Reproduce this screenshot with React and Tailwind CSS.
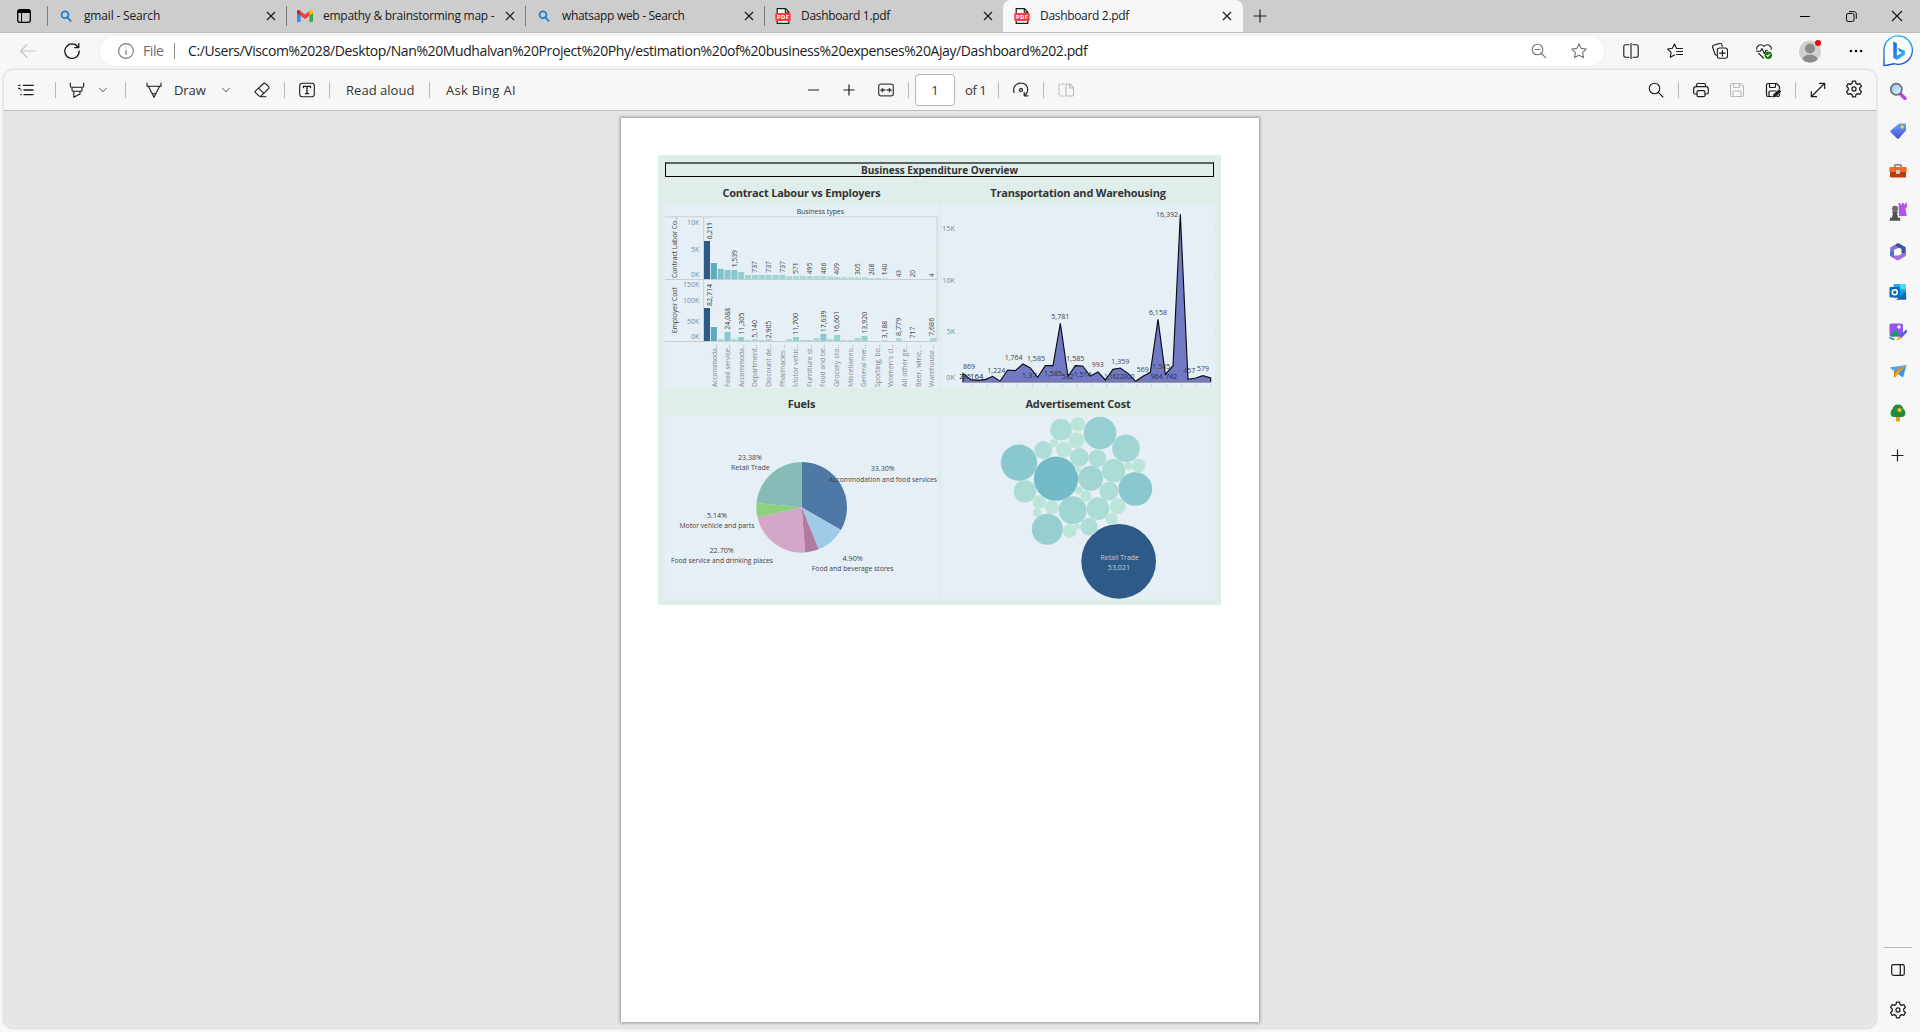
import React from "react";

/* ---------- icon helpers ---------- */
function Ico({ c = "#1b1b1b", w = 16, sw = 1.1, children }) {
  return (
    <svg width={w} height={w} viewBox="0 0 16 16" fill="none" stroke={c} strokeWidth={sw} strokeLinecap="round" strokeLinejoin="round" className="block shrink-0">
      {children}
    </svg>
  );
}

const Close = () => (
  <svg width="10" height="10" viewBox="0 0 10 10" stroke="#1b1b1b" strokeWidth="1.2" className="block shrink-0"><path d="M1 1l8 8M9 1l-8 8" /></svg>
);
const SearchFav = () => (
  <svg width="12" height="12" viewBox="0 0 12 12" fill="none" stroke="#1b7ac9" strokeWidth="1.7" strokeLinecap="round" className="block"><circle cx="5" cy="4.8" r="3.4" /><path d="M7.6 7.6L10.8 11" /></svg>
);
const GmailFav = () => (
  <svg width="16" height="12" viewBox="0 0 16 12" className="block">
    <path d="M0 2v9a1 1 0 001 1h2.6V5z" fill="#4285f4" />
    <path d="M16 2v9a1 1 0 01-1 1h-2.600V5z" fill="#34a853" />
    <path d="M12.400 1.300V5.700L16 3V1.700C16 0 14-.5 12.800.700z" fill="#fbbc04" />
    <path d="M3.600 1.300V5.700L0 3V1.700C0 0 2-.5 3.200.700z" fill="#c5221f" />
    <path d="M3.600 1.200L8 4.600l4.400-3.400v4.500L8 9 3.600 5.700z" fill="#ea4335" />
  </svg>
);
const PdfFav = () => (
  <svg width="16" height="16" viewBox="0 0 16 16" className="block">
    <path d="M2.200.700h8.300l3.300 3.300v11.300H2.200z" fill="#fff" stroke="#1b1b1b" strokeWidth="1.2" />
    <path d="M10.300.700V4.200h3.500" fill="none" stroke="#1b1b1b" strokeWidth="1.1" />
    <rect x="0.300" y="5" width="15.400" height="8" rx="1" fill="#f93e3e" />
    <text x="8" y="11.200" fontSize="5.800" fontWeight="700" fill="#fff" textAnchor="middle" textLength="12" fontFamily="Open Sans, sans-serif">PDF</text>
  </svg>
);
const Chevron = () => (
  <svg width="10" height="6" viewBox="0 0 10 6" fill="none" stroke="#555" strokeWidth="1" className="block"><path d="M1.200 1L5 4.600 8.800 1" /></svg>
);
const Sep = () => <div className="h-4 w-px shrink-0 bg-[#b8b8b8]" />;
const GearPath = () => (
  <>
    <path d="M6.700 1h2.600l.5 2 1.500.9 2-.6 1.300 2.300-1.500 1.500v1.800l1.500 1.500-1.300 2.300-2-.6-1.500.9-.5 2H6.700l-.5-2-1.500-.9-2 .6-1.300-2.300 1.500-1.500V7.100L1.400 5.600l1.300-2.300 2 .6 1.500-.9z" />
    <circle cx="8" cy="8" r="1.800" />
  </>
);
const Floppy = () => (
  <>
    <path d="M1.500 3c0-.8.7-1.500 1.500-1.500h8.500l3 3V13c0 .8-.7 1.500-1.500 1.500H3c-.8 0-1.500-.7-1.500-1.500z" />
    <path d="M4.500 1.700V4.500c0 .6.4 1 1 1h4c.6 0 1-.4 1-1V1.700M4 14.300V10c0-.6.4-1 1-1h6c.6 0 1 .4 1 1v4.300" />
  </>
);

/* ---------- tab strip ---------- */
const TABS = [
  { icon: <SearchFav />, title: "gmail - Search", cls: "tracking-[-0.17px]" },
  { icon: <GmailFav />, title: "empathy & brainstorming map -", cls: "tracking-[-0.27px]" },
  { icon: <SearchFav />, title: "whatsapp web - Search", cls: "tracking-[-0.32px]" },
  { icon: <PdfFav />, title: "Dashboard 1.pdf", cls: "tracking-[-0.32px]" },
];

function TabBody({ icon, title, cls }) {
  return (
    <>
      <div className="ml-[10px] flex w-4 shrink-0 justify-center">{icon}</div>
      <div className={"ml-[10px] w-[182px] shrink-0 overflow-hidden text-[12px] leading-4 whitespace-nowrap text-[#1b1b1b] " + cls}>{title}</div>
      <Close />
    </>
  );
}

function TabStrip() {
  return (
    <div className="flex h-8 items-center bg-[#cdcdcd]">
      <div className="flex w-[47px] shrink-0 justify-center">
        <svg width="14" height="14" viewBox="0 0 14 14"><rect x=".7" y=".7" width="12.600" height="12.600" rx="2" fill="none" stroke="#000" strokeWidth="1.300" /><path d="M1 1h12v3H1z" /><path d="M4.500 4v9" stroke="#000" /></svg>
      </div>
      {TABS.map((t) => (
        <div key={t.title} className="flex h-8 w-[239px] shrink-0 items-center">
          <div className="h-5 w-px shrink-0 bg-[#7b7b7b]" />
          <TabBody {...t} />
        </div>
      ))}
      <div className="flex h-8 w-[240px] shrink-0 items-center rounded-t-lg bg-[#f7f7f7] pl-px">
        <TabBody icon={<PdfFav />} title="Dashboard 2.pdf" cls="tracking-[-0.32px]" />
      </div>
      <div className="ml-[10px]">
        <svg width="14" height="14" viewBox="0 0 14 14" stroke="#1b1b1b" strokeWidth="1.1" className="block"><path d="M7 .5v13M.5 7h13" /></svg>
      </div>
      <div className="ml-auto flex items-center pr-[17px]">
        <div className="h-px w-[10px] bg-black" />
        <svg width="11" height="11" viewBox="0 0 11 11" fill="none" stroke="#111" className="ml-9 block"><rect x=".5" y="2.500" width="7.500" height="8" rx="1.500" /><path d="M3 .6h5c1.300 0 2.300 1 2.300 2.300v5" /></svg>
        <svg width="12" height="12" viewBox="0 0 12 12" stroke="#111" strokeWidth="1.100" className="ml-[34px] block"><path d="M1 1l10 10M11 1L1 11" /></svg>
      </div>
    </div>
  );
}

/* ---------- address row ---------- */
function AddressRow() {
  return (
    <div className="flex h-[38px] items-center border-t border-[#bdbdbd] bg-[#f7f7f7] pb-px">
      <div className="ml-5"><Ico c="#c4c4c4"><path d="M15.500 8H.8M7 1.500L.6 8 7 14.500" /></Ico></div>
      <div className="ml-7"><Ico sw={1.3}><path d="M13.800 3.900A7.200 7.200 0 1015.200 8M14.800.6v4h-4" /></Ico></div>
      <div className="ml-5 flex h-[30px] w-[1504px] items-center rounded-full bg-white pl-[18px] shadow-[0_0_3px_rgba(0,0,0,0.06)]">
        <Ico c="#767676"><circle cx="8" cy="8" r="7.400" /><path d="M8 7.200v4.300M8 4.700v.2" /></Ico>
        <div className="ml-[9px] w-[31px] text-[14px] leading-5 tracking-[-0.4px] text-[#6e6e6e]">File</div>
        <div className="h-4 w-px bg-[#8f8f8f]" />
        <div className="ml-[13px] w-[1343px] text-[14px] leading-5 tracking-[-0.403px] whitespace-nowrap text-[#1b1b1b]">
          C:/Users/Viscom%2028/Desktop/Nan%20Mudhalvan%20Project%20Phy/estimation%20of%20business%20expenses%20Ajay/Dashboard%202.pdf
        </div>
        <Ico c="#767676"><circle cx="6.500" cy="6.500" r="5.300" /><path d="M10.500 10.500l4.300 4.300M4 6.500h5" /></Ico>
        <div className="ml-6"><Ico c="#767676"><path d="M8 .8l2.200 4.600 5 .7-3.600 3.500.9 5L8 12.200l-4.500 2.400.9-5L.8 6.100l5-.7z" /></Ico></div>
      </div>
      <div className="ml-[19px]"><Ico><path d="M6 1.800H2.500C1.500 1.800.8 2.500.8 3.500v9c0 1 .7 1.700 1.700 1.700H6M10 1.800h3.500c1 0 1.700.7 1.700 1.700v9c0 1-.7 1.700-1.700 1.700H10M8 .3v15.400" /></Ico></div>
      <div className="ml-7"><Ico><path d="M9.600 5.300L7.500 1 5.400 5.300.7 6l3.400 3.400-.8 4.800 4.200-2.300M9.600 5.500h6M9.600 8.500h6M9.600 11.500h6" /></Ico></div>
      <div className="ml-[29px]"><Ico><path d="M4.700 12.200L3.200 11.800 .6 4.300c-.3-1 .2-1.800 1-2.100L7.600.4c.9-.3 1.800.2 2.100 1l.6 2.100" /><rect x="5.300" y="5" width="10.200" height="10.200" rx="2.200" /><path d="M10.400 7.300v5.600M7.600 10.100h5.600" /></Ico></div>
      <div className="ml-7">
        <Ico><path d="M.8 6.300C.2 2.800 4.700-.1 8 3.300c3.300-3.400 7.800-.5 7.200 3M.3 8.300h4l1.600-2.800 2.500 5 1.700-3.200h1.200M2.600 10.300L7.500 15" /><circle cx="12.300" cy="12.300" r="3.700" fill="#137a13" stroke="none" /><path d="M10.800 12.400l1 1 2-2.200" stroke="#fff" /></Ico>
      </div>
      <div className="ml-[27px]">
        <svg width="22" height="24" viewBox="0 0 22 24" className="block"><circle cx="11" cy="12.500" r="11" fill="#d2d0ce" /><circle cx="11" cy="9.500" r="5" fill="#8d8b89" /><path d="M3.500 20.500c0-6.500 15-6.500 15 0-3.500 4-11.500 4-15 0z" fill="#8d8b89" /><circle cx="19" cy="4" r="3" fill="#e8060c" /></svg>
      </div>
      <div className="ml-7"><svg width="14" height="4" viewBox="0 0 14 4" className="block"><circle cx="1.900" cy="2" r="1.300" /><circle cx="7" cy="2" r="1.300" /><circle cx="12.100" cy="2" r="1.300" /></svg></div>
      <div className="ml-5">
        <svg width="30" height="32" viewBox="0 0 30 32" className="block">
          <defs>
            <linearGradient id="bingRing" x1="0" y1="0" x2="0" y2="1"><stop offset="0" stopColor="#2bb5ea" /><stop offset="1" stopColor="#1b4fd0" /></linearGradient>
            <linearGradient id="bingB" x1="0" y1="0" x2="1" y2="1"><stop offset="0" stopColor="#1d60e0" /><stop offset=".5" stopColor="#2a8bf0" /><stop offset="1" stopColor="#3fd0e8" /></linearGradient>
          </defs>
          <path d="M1 30.500V15a14.200 14.200 0 1110 13.700L3.500 30.300z" fill="#fff" stroke="url(#bingRing)" strokeWidth="1.400" />
          <path d="M10.300 6.500l3.600 1.700v12.600l5-3-2.700-1.200-1.500-3.900 7.300 3v4l-8.200 5.300-3.500-2.300z" fill="url(#bingB)" strokeLinejoin="round" />
        </svg>
      </div>
    </div>
  );
}

/* ---------- PDF toolbar ---------- */
function PdfToolbar() {
  return (
    <div className="flex h-[41px] items-center rounded-tr-[9px] rounded-tl-[9px] border-b border-[#bdbdbd] bg-[#f7f7f7] text-[13px] leading-5 whitespace-nowrap text-[#333]">
      <div className="ml-[14px]"><Ico sw={1.3}><path d="M5 3.300h10.700M5.500 8h10M5.500 12.700h10" strokeLinecap="butt" /><path d="M.7 3.300h1.200M.7 6.500h1.200M3 8h.2M3 12.700h.2" /></Ico></div>
      <div className="ml-[21px]"><Sep /></div>
      <div className="ml-[13px]"><Ico><path d="M1.300 1v3c0 .7.500 1.200 1.200 1.200h11c.7 0 1.200-.5 1.200-1.200V1M3 5.500V8c0 .8.5 1.300 1.300 1.300h7.400C12.500 9.300 13 8.800 13 8V5.500M4.800 9.500v5.800L11 12V9.500" /></Ico></div>
      <div className="ml-[13px]"><Chevron /></div>
      <div className="ml-[17px]"><Sep /></div>
      <div className="ml-5"><Ico><path d="M1 1v3M15 1v3M1 4.200h14M2.500 4.500L8 15.300l5.500-10.800M6.400 11.700h3.200" /></Ico></div>
      <div className="ml-3 w-[33px] tracking-[-0.1px]">Draw</div>
      <div className="ml-[14px]"><Chevron /></div>
      <div className="ml-[23px]"><Ico><path d="M9.500 1.500c.6-.6 1.300-.6 1.900 0l3.200 3.200c.6.600.6 1.300 0 1.900L7.500 13.700c-.8.800-2.200.8-3 0L1.500 10.700c-.6-.600-.6-1.300 0-1.900zM4.800 6.300l5 5M6.500 14.800h5.500" /></Ico></div>
      <div className="ml-[14px]"><Sep /></div>
      <div className="ml-[14px]"><Ico><rect x=".7" y="1.200" width="14.600" height="13.600" rx="2.500" /><path d="M4.500 5.500V4.300h7v1.200M8 4.300v7.400M6.500 11.700h3" strokeWidth="1.300" /></Ico></div>
      <div className="ml-[14px]"><Sep /></div>
      <div className="ml-4 w-[70px] tracking-[0.03px]">Read aloud</div>
      <div className="ml-[13px]"><Sep /></div>
      <div className="ml-4 w-[71px] tracking-[0.3px]">Ask Bing AI</div>
      <div className="ml-[291px] h-[2px] w-[11px] bg-[#8a8a8a]" />
      <div className="ml-6"><svg width="12" height="12" viewBox="0 0 12 12" stroke="#1b1b1b" strokeWidth="1.200" className="block"><path d="M6 .5v11M.5 6h11" /></svg></div>
      <div className="ml-[23px]"><Ico c="#444" sw={1.3}><rect x=".7" y="2.200" width="14.600" height="11.600" rx="2" /><path d="M2.500 8l2.500-2v4zM13.500 8L11 6v4z" fill="#222" strokeWidth=".5" /><path d="M4 8h3M9 8h3" /></Ico></div>
      <div className="ml-[14px]"><Sep /></div>
      <div className="ml-[6px] flex h-8 w-10 items-center justify-center rounded-sm border border-[#b5b5b5] bg-white">1</div>
      <div className="ml-[10px] w-[21px] tracking-[-0.4px]">of 1</div>
      <div className="ml-3"><Sep /></div>
      <div className="ml-[14px]"><Ico c="#333" sw={1.3}><path d="M1 10.500A7 7 0 018 1.200c6.500 0 9 7 4 12.300M15 13.800h-3.800V10.500" /><circle cx="8" cy="8" r="1.500" /></Ico></div>
      <div className="ml-[14px]"><Sep /></div>
      <div className="ml-[14px]"><Ico c="#b9b9b9"><path d="M6 2H2.500C1.600 2 1 2.600 1 3.500v9c0 .9.600 1.500 1.500 1.500H6" strokeDasharray="2.500 1.500" /><path d="M8 2h4l3.500 3.700v7c0 .8-.6 1.300-1.300 1.300H8zM11.500 2v4h4" /></Ico></div>
      <div className="ml-[574px]"><Ico><circle cx="6.500" cy="6.500" r="5.300" /><path d="M10.300 10.300l4.700 4.700" /></Ico></div>
      <div className="ml-[14px]"><Sep /></div>
      <div className="ml-[14px]"><Ico sw={1.2}><path d="M4 12H2.300C1.300 12 .7 11.400.7 10.500V7c0-1.300 1-2.300 2.300-2.300h10c1.300 0 2.300 1 2.300 2.300v3.500c0 .9-.6 1.500-1.600 1.500H12M3.500 4.500V3c0-.9.6-1.500 1.500-1.500h6c.9 0 1.500.6 1.500 1.500v1.500" /><rect x="4" y="8.700" width="8" height="6" rx="1.500" /></Ico></div>
      <div className="ml-5"><Ico c="#b9b9b9"><Floppy /></Ico></div>
      <div className="ml-5"><Ico sw={1.2}><Floppy /><path d="M7.200 15.800l1-3.500 5.800-5.300 2.500 2.500-5.800 5.500z" fill="#1b1b1b" stroke="#f7f7f7" strokeWidth=".5" /></Ico></div>
      <div className="ml-[14px]"><Sep /></div>
      <div className="ml-[14px]"><Ico sw={1.2}><path d="M1.500 14.500l13-13M9.500 1.300h5.200v5.200M1.300 9.500v5.200h5.200" /></Ico></div>
      <div className="ml-[19px] pb-[2px]"><Ico w={18} sw={1.1}><GearPath /></Ico></div>
    </div>
  );
}

/* ---------- dashboard charts ---------- */
const BARS_A = [288, 354, 372, 375, 375, 381, 390, 390, 390, 390, 390, 390, 393, 393, 393, 393, 393, 393, 394, 396, 396, 396, 396, 396, 399, 399, 400];
const BARS_B = [489, 546, 582, 561, 582, 576, 585, 582, 585, 582, null, null, 582, 576, 585, 585, 579, 567, 582, 570, 585, 585, 579, 573, null, null, 586, null, 579, null, null, null, null, 579];
const colorA = (i) => (i === 0 ? "#2e5a87" : i === 1 ? "#5aabbe" : i === 2 ? "#7fc0c9" : i < 5 ? "#89c7ce" : i === 5 ? "#94cfd0" : i < 12 ? "#9fd5d2" : i < 20 ? "#a9dad4" : "#b5e0d7");
const colorB = (i, y) => (i === 0 ? "#2e5a87" : i === 1 ? "#5aabbe" : y < 570 ? "#89c6ce" : y < 578 ? "#95d0d0" : "#a9dbd4");
const LABEL_A = [[0, "6,211", 283, 52], [4, "1,539", 367, 52], [7, "737", 383, 35], [9, "737", 383, 35], [11, "737", 383, 35], [13, "571", 387, 35], [15, "495", 388, 35], [17, "466", 388, 35], [19, "409", 389, 35], [22, "305", 390, 35], [24, "208", 391, 35], [26, "140", 391, 35], [28, "43", 397, 22], [30, "20", 397, 22], [32.8, "4", 396, 11]];
const LABEL_B = [[0, "82,714", 483, 66], [3, "24,088", 554, 66], [5, "11,305", 569, 66], [7, "5,140", 578, 53], [9, "2,905", 580, 53], [13, "11,700", 570, 66], [17, "17,639", 562, 66], [19, "16,601", 564, 66], [23, "13,920", 566, 66], [26, "3,188", 580, 53], [28, "8,779", 573, 55], [30, "717", 580, 35], [32.8, "7,686", 573, 55]];
const CATS = ["Accommoda..", "Food service..", "Accommoda..", "Department..", "Discount de..", "Pharmacies ..", "Motor vehic..", "Furniture st..", "Food and be..", "Grocery sto..", "Miscellaneo..", "General mer..", "Sporting, bo..", "Women's cl..", "All other ge..", "Beer, wine, ..", "Warehouse .."];
const PITCH = 20.55;

function Txt({ x, y, s = 20.5, len, fill = "#444", anchor = "middle", weight, children }) {
  return (
    <text x={x} y={y} fontSize={s} fill={fill} fontWeight={weight} textAnchor={anchor} textLength={len} lengthAdjust="spacingAndGlyphs">{children}</text>
  );
}
function VTxt({ x, y, s = 20.5, len, fill = "#444", children }) {
  return (
    <text transform={`translate(${x} ${y}) rotate(-90)`} fontSize={s} fill={fill} textLength={len} lengthAdjust="spacingAndGlyphs">{children}</text>
  );
}

function LabourChart() {
  return (
    <svg width="273" height="183" viewBox="45 180 819 549" className="block">
      <path d="M162 312H860M162 466H860M162 528H860" stroke="#eff1f1" strokeWidth="3" />
      <path d="M45 215.500H862M45 403.500H862M45 589.500H862M161 215V590M861.500 215V590" stroke="#cacdcf" strokeWidth="3" />
      <Txt x={511} y={206} len={142} fill="#3a3a3a" weight="500">Business types</Txt>
      <Txt x={148} y={240} len={37} anchor="end" fill="#85898d">10K</Txt>
      <Txt x={148} y={320} len={25} anchor="end" fill="#85898d">5K</Txt>
      <Txt x={148} y={395} len={25} anchor="end" fill="#85898d">0K</Txt>
      <Txt x={148} y={426} len={49} anchor="end" fill="#85898d">150K</Txt>
      <Txt x={148} y={474} len={49} anchor="end" fill="#85898d">100K</Txt>
      <Txt x={148} y={537} len={37} anchor="end" fill="#85898d">50K</Txt>
      <Txt x={148} y={582} len={25} anchor="end" fill="#85898d">0K</Txt>
      <VTxt x={81} y={399} len={182} fill="#3f3f3f">Contract Labor Co..</VTxt>
      <VTxt x={81} y={565} len={139} fill="#3f3f3f">Employer Cost</VTxt>
      {BARS_A.map((y, i) => <rect key={i} x={162 + i * PITCH} y={y} width="18" height={402 - y} fill={colorA(i)} />)}
      {BARS_B.map((y, i) => y && <rect key={i} x={162 + i * PITCH} y={y} width="18" height={588 - y} fill={colorB(i, y)} />)}
      {LABEL_A.map(([i, t, y, l]) => <VTxt key={i} x={i === 0 ? 185 : 178 + i * PITCH} y={y} len={l}>{t}</VTxt>)}
      {LABEL_B.map(([i, t, y, l]) => <VTxt key={i} x={i === 0 ? 185 : 178 + i * PITCH} y={y} len={l}>{t}</VTxt>)}
      {CATS.map((t, i) => <VTxt key={i} x={200 + i * 40.8} y={726} len={127} fill="#85898d">{t}</VTxt>)}
    </svg>
  );
}

const AREA = [[84, 685], [107, 704], [130, 706], [152, 703], [173, 694], [195, 709], [218, 675], [241, 677], [264, 657], [286, 669], [308, 697], [331, 662], [354, 662], [376, 535], [399, 694], [421, 662], [443, 663], [466, 693], [489, 681], [511, 705], [534, 673], [556, 669], [579, 685], [602, 709], [624, 694], [646, 682], [669, 523], [691, 688], [714, 662], [736, 208], [759, 703], [782, 699], [804, 692], [827, 699]];
const AREA_LABELS = [[102, 671, "869", 36], [90, 701, "235", 34], [125, 701, "164", 40], [184, 683, "1,224", 54], [236, 644, "1,764", 54], [303, 647, "1,585", 54], [283, 698, "1,37", 46], [354, 692, "1,585", 54], [376, 521, "5,781", 54], [398, 702, "532", 36], [421, 647, "1,585", 54], [443, 695, "1,514", 54], [488, 667, "993", 36], [531, 701, "1,162", 46], [576, 701, "2800", 44], [556, 656, "1,359", 54], [623, 680, "569", 36], [669, 509, "6,158", 54], [665, 701, "964", 36], [679, 671, "1,585", 54], [709, 701, "742", 36], [696, 215, "16,392", 66], [763, 684, "457", 36], [804, 677, "579", 36]];

function WarehouseChart() {
  const pts = AREA.map((p) => p.join(",")).join(" ");
  return (
    <svg width="273" height="183" viewBox="21 180 819 549" className="block">
      <path d="M72 249H838M72 404H838M72 557H838" stroke="#ecf0f2" strokeWidth="3" />
      <path d="M72 182V712" stroke="#ecf0f2" strokeWidth="3" />
      <polygon points={`84,711 ${pts} 827,711`} fill="#7179c4" />
      <polyline points={`84,711 ${pts} 827,711`} fill="none" stroke="#0b0b14" strokeWidth="3.4" />
      <path d="M82 711.500H829" stroke="#77787d" strokeWidth="3" />
      {Array.from({ length: 17 }, (_, i) => <path key={i} d={`M${112.500 + i * 44.800} 719v7`} stroke="#c3c8cc" strokeWidth="3" />)}
      <Txt x={60} y={258} len={38} anchor="end" fill="#85898d">15K</Txt>
      <Txt x={60} y={414} len={38} anchor="end" fill="#85898d">10K</Txt>
      <Txt x={60} y={567} len={25} anchor="end" fill="#85898d">5K</Txt>
      <Txt x={60} y={705} len={26} anchor="end" fill="#85898d">0K</Txt>
      {AREA_LABELS.map(([x, y, t, l], i) => <Txt key={i} x={x} y={y} len={l} fill={y > 688 ? "#2b2b38" : "#444"}>{t}</Txt>)}
    </svg>
  );
}

const SLICES = [[0, 119.900, "#4e79a7"], [119.900, 158, "#a0cbe8"], [158, 175.700, "#b07aa1"], [175.700, 257.500, "#d4a6c8"], [257.500, 275.500, "#8cd17d"], [275.500, 360, "#86bcb6"]];
function slicePath(a, b) {
  const p = (d) => {
    const r = ((d - 90) * Math.PI) / 180;
    return `${455 + 136 * Math.cos(r)} ${367 + 136 * Math.sin(r)}`;
  };
  return `M455 367L${p(a)}A136 136 0 0 1 ${p(b)}Z`;
}
function FuelsChart() {
  return (
    <svg width="273" height="183" viewBox="45 93 819 549" className="block">
      {SLICES.map(([a, b, c]) => <path key={a} d={slicePath(a, b)} fill={c} />)}
      <Txt x={300} y={224} len={72}>23.38%</Txt>
      <Txt x={301} y={255} len={116}>Retail Trade</Txt>
      <Txt x={698} y={257} len={72}>33.30%</Txt>
      <Txt x={699} y={291} len={324}>Accommodation and food services</Txt>
      <Txt x={201} y={398} len={60}>5.14%</Txt>
      <Txt x={201} y={429} len={225}>Motor vehicle and parts</Txt>
      <Txt x={215} y={503} len={73}>22.70%</Txt>
      <Txt x={216} y={533} len={306}>Food service and drinking places</Txt>
      <Txt x={608} y={527} len={61}>4.90%</Txt>
      <Txt x={608} y={558} len={245}>Food and beverage stores</Txt>
    </svg>
  );
}

const BUBBLES = [
  [551, 529, 112, "#2e5a87"], [363, 281, 66.500, "#74bbc8"], [252, 233, 54.500, "#8ac8cf"], [601, 312, 50.500, "#8ac8cf"], [495, 144, 49, "#95cfd0"], [337, 433, 46.500, "#95cfd0"],
  [573, 190, 41.500, "#9fd5d2"], [413, 376, 42, "#9fd5d2"], [467, 280, 37.500, "#a1d5d2"], [536, 257, 35, "#aadbd5"], [489, 371, 34, "#aadbd5"], [270, 319, 33.500, "#aadbd5"], [378, 134, 32.500, "#aedcd6"],
  [522, 319, 28.500, "#aedcd6"], [433, 217, 28, "#aedcd6"], [325, 195, 27, "#aedcd6"], [487, 220, 26.500, "#aedcd6"], [462, 425, 26.500, "#b0dcd7"], [425, 166, 24, "#bce5d9"], [548, 364, 24, "#bce5d9"],
  [387, 194, 23.500, "#bce5d9"], [429, 118, 21.500, "#bce5d9"], [351, 367, 21, "#bce5d9"], [611, 242, 20.500, "#bce5d9"], [404, 438, 20.500, "#bce5d9"], [313, 351, 20, "#bce5d9"], [530, 402, 18, "#bce5d9"],
  [453, 333, 16.500, "#bce5d9"], [306, 383, 13, "#bce5d9"], [357, 174, 12, "#bce5d9"], [580, 243, 12, "#bce5d9"], [431, 316, 11.500, "#bce5d9"], [429, 253, 8.500, "#bce5d9"], [428, 424, 8, "#bce5d9"],
];
function AdvertisementChart() {
  return (
    <svg width="273" height="183" viewBox="21 93 819 549" className="block">
      {BUBBLES.map(([x, y, r, c]) => <circle key={`${x}-${y}`} cx={x} cy={y} r={r} fill={c} />)}
      <Txt x={554} y={525} len={115} fill="#c3ced9">Retail Trade</Txt>
      <Txt x={552} y={555} len={67} fill="#c3ced9">53,021</Txt>
    </svg>
  );
}

function Panel({ title, head, children }) {
  return (
    <div className="w-[273px]">
      <div className={"flex items-center justify-center text-[11px] leading-none font-bold whitespace-nowrap text-[#333] " + head}>{title}</div>
      <div className="h-[183px] overflow-hidden bg-[#e6eff5]">{children}</div>
    </div>
  );
}

function Dashboard() {
  return (
    <div className="mt-[37px] ml-[37px] h-[450px] w-[563px] bg-[#dfeeea] px-[7px] pt-[7px]">
      <div className="flex h-[15px] w-[549px] items-center justify-center border border-t-2 border-black border-t-[#5b6664] text-[10px] leading-none font-bold whitespace-nowrap text-[#333]">
        Business Expenditure Overview
      </div>
      <div className="flex gap-1">
        <Panel title="Contract Labour vs Employers" head="h-[28px] pt-[3px] tracking-[-0.22px]"><LabourChart /></Panel>
        <Panel title="Transportation and Warehousing" head="h-[28px] pt-[3px] pr-px tracking-[-0.22px]"><WarehouseChart /></Panel>
      </div>
      <div className="flex gap-1">
        <Panel title="Fuels" head="h-[28px] pt-[2px] tracking-[-0.2px]"><FuelsChart /></Panel>
        <Panel title="Advertisement Cost" head="h-[28px] pt-[2px] pr-px tracking-[-0.2px]"><AdvertisementChart /></Panel>
      </div>
    </div>
  );
}

/* ---------- sidebar ---------- */
const SIDE = [
  <svg key="s" width="18" height="18" viewBox="0 0 18 18"><defs><linearGradient id="lensG" x1="0" y1="0" x2="1" y2="1"><stop offset="0" stopColor="#7cc7f2" /><stop offset="1" stopColor="#e5f6ff" /></linearGradient></defs><path d="M11 11.500l5 5" stroke="#c13df0" strokeWidth="3.400" strokeLinecap="round" /><circle cx="7.300" cy="7.300" r="5.600" fill="url(#lensG)" stroke="#6f6f73" strokeWidth="1.700" /></svg>,
  <svg key="t" width="18" height="18" viewBox="0 0 18 18"><defs><linearGradient id="tagG" x1="0" y1="0" x2="0" y2="1"><stop offset="0" stopColor="#5da8ff" /><stop offset="1" stopColor="#4b4bdc" /></linearGradient></defs><path d="M10 1.500h6c.7 0 1 .4 1 1v6L9.800 16.500c-.5.5-1.200.5-1.700 0L1.700 10.300c-.6-.5-.6-1.200 0-1.700z" fill="url(#tagG)" /><circle cx="13.300" cy="5" r="1.600" fill="#ffe066" stroke="#e7a512" strokeWidth=".8" /></svg>,
  <svg key="b" width="18" height="18" viewBox="0 0 18 18"><path d="M5.700 6V4c0-.8.5-1.200 1.200-1.200h4.200c.7 0 1.200.4 1.200 1.200v2" fill="none" stroke="#777" strokeWidth="1.500" /><rect x=".3" y="5" width="17.400" height="5.300" rx="1.300" fill="#f0692b" /><path d="M1 10h16v4.500c0 .6-.4 1-1 1H2c-.6 0-1-.4-1-1z" fill="#bd3a0f" /><rect x="7" y="8" width="4" height="4" rx="1" fill="#c8d0d4" /></svg>,
  <svg key="c" width="18" height="18" viewBox="0 0 18 18"><path d="M9.600 0h1.800v1.500h1.500V0h1.900v1.500h1.400V0H18v4l-1.500 1.300.9 6.200.6 1.500h-8z" fill="#b352ef" /><circle cx="6" cy="5.700" r="3" fill="#6a6a6e" /><path d="M3 8.500h6v1.300H8l1 5h2l.4 3H.6l.4-3h2l1-5H3z" fill="#515155" /></svg>,
  <svg key="o" width="18" height="18" viewBox="0 0 18 18"><path d="M8 .6L1.200 4.500v8.300L5 15V7l7-3.400z" fill="#8a6fd8" /><path d="M8 .6c1-.5 1.900-.4 2.700.1l6 3.600v8l-4.200-2V6L6.500 3z" fill="#35579f" /><path d="M16.700 9v4L10 17c-1 .5-1.800.4-2.600 0L1.500 13l8.500-.700z" fill="#a76be0" /><path d="M1.200 8v4.800L5 15V9z" fill="#3d78d8" /><path d="M9 5.400l3.100 1.800v3.600L9 12.600l-3.100-1.800V7.200z" fill="#fff" /></svg>,
  <svg key="u" width="18" height="18" viewBox="0 0 18 18"><rect x="4.500" y="1" width="12.500" height="14" rx="1" fill="#28a8ea" /><path d="M11 1h6v5h-6z" fill="#50d9ff" /><path d="M4.500 9L17 16.500V8z" fill="#1490df" /><path d="M17 9l-10 7.700h9.500c.5 0 .8-.3.800-.800z" fill="#1066b5" /><rect x=".5" y="4" width="10.500" height="10.500" rx="1" fill="#0f6cbd" /><circle cx="5.750" cy="9.250" r="2.500" fill="none" stroke="#fff" strokeWidth="1.500" /></svg>,
  <svg key="i" width="18" height="18" viewBox="0 0 18 18"><rect x=".5" y=".5" width="13.500" height="13" rx="2" fill="#9256ec" /><path d="M1 13l4.500-5c.8-.9 1.700-.9 2.500 0l4 5.500H2z" fill="#159c6b" /><circle cx="10" cy="4" r="1.700" fill="#fff" /><path d="M17.500 8l-6 6" stroke="#5c5ae8" strokeWidth="2.500" strokeLinecap="round" /><path d="M7 17.300c3 0 5-.9 5-3l-1.500-1c-2 .2-1.500 2.200-3.500 4z" fill="#f7a928" /><path d="M.3 15c2-1.500 2.300 2.300 5 1" fill="none" stroke="#159c6b" strokeWidth="1.400" /></svg>,
  <svg key="p" width="18" height="18" viewBox="0 0 18 18"><path d="M17.500 2L.5 4.500 5 8z" fill="#42a8f3" /><path d="M17.500 2L5 8v7z" fill="#c87916" /><path d="M17.500 2L6.300 9 14 14.500z" fill="#3495ed" /><path d="M17.500 2L5.300 15 6.700 9.300z" fill="#f3a51c" /></svg>,
  <svg key="r" width="18" height="18" viewBox="0 0 18 18"><rect x="7" y="11" width="4" height="6.500" rx="1" fill="#f39a1d" /><path d="M9 .5c4 0 5 3 5.500 4.500 3 2 2.500 8-1.500 8H5c-4 0-4.500-6-1.500-8C4 3.500 5 .5 9 .5z" fill="#218a3c" /><path d="M10.500 3.400l.9 1.200 1.500.2-.6 1.200.6 1.300-1.500.1-.9 1.200-.9-1.200-1.500-.1.600-1.300-.6-1.200 1.500-.2z" fill="#f8c31c" /></svg>,
];

function Sidebar() {
  return (
    <div className="flex w-[43px] shrink-0 flex-col items-center">
      <div className="mt-3 flex flex-col gap-[22.200px]">{SIDE}</div>
      <svg width="13" height="13" viewBox="0 0 13 13" stroke="#222" strokeWidth="1.200" className="mt-[27px] block"><path d="M6.500 .5v12M.5 6.500h12" /></svg>
      <div className="mt-auto h-px w-7 bg-[#b9b9b9]" />
      <svg width="14" height="12" viewBox="0 0 14 12" fill="none" stroke="#1b1b1b" strokeWidth="1.200" className="mt-4 block"><rect x=".7" y=".7" width="12.600" height="10.600" rx="1.800" /><path d="M9.300 1v10" /></svg>
      <div className="mt-[25px] mb-[13px]"><Ico w={18} sw={1.1}><GearPath /></Ico></div>
    </div>
  );
}

export default function App() {
  return (
    <div className="flex h-[1032px] w-[1920px] flex-col overflow-hidden bg-[#f7f7f7] font-['Open_Sans',sans-serif]">
      <TabStrip />
      <AddressRow />
      <div className="flex min-h-0 grow">
        <div className="mb-1 ml-1 flex w-[1872px] flex-col overflow-hidden rounded-[9px] bg-[#e6e6e6] shadow-[0_0_3px_rgba(0,0,0,0.25)]">
          <PdfToolbar />
          <div className="mt-[7px] ml-[617px] h-[904px] w-[638px] shrink-0 overflow-hidden bg-white shadow-[0_0_3px_1px_rgba(0,0,0,0.35)]">
            <Dashboard />
          </div>
        </div>
        <Sidebar />
      </div>
    </div>
  );
}
